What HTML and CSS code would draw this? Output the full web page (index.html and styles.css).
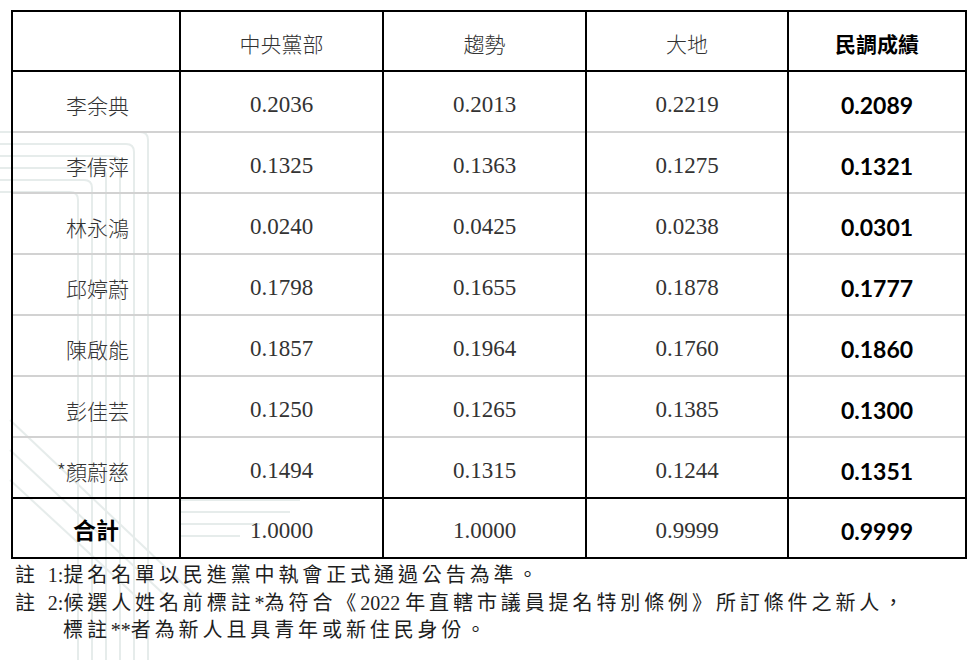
FILE: index.html
```html
<!DOCTYPE html>
<html lang="zh-Hant">
<head>
<meta charset="utf-8">
<title>民調成績</title>
<link rel="stylesheet" href="styles.css">
</head>
<body>
<div class="page">
  <svg class="watermark" width="330" height="540" viewBox="0 0 330 540" aria-hidden="true">
    <g fill="none" stroke="#e6eceb" stroke-width="2">
      <path d="M0 12 H140 Q148 12 148 20 V540"/>
      <path d="M0 24 H126 Q134 24 134 32 V540"/>
      <path d="M0 36 H112 Q120 36 120 44 V540"/>
      <path d="M0 48 H98 Q106 48 106 56 V540"/>
      <path d="M0 60 H84 Q92 60 92 68 V540"/>
      <path d="M0 72 H70 Q78 72 78 80 V540"/>
      <path d="M10 300 L200 480"/>
      <path d="M10 330 L170 480"/>
      <path d="M10 360 L140 480"/>
      <path d="M180 380 H300"/>
      <path d="M180 392 H290"/>
      <path d="M180 404 H260"/>
      <path d="M180 416 H240"/>
    </g>
  </svg>
  <table class="scores">
    <colgroup>
      <col class="c-name">
      <col class="c-a">
      <col class="c-b">
      <col class="c-c">
      <col class="c-total">
    </colgroup>
    <thead>
      <tr class="head">
        <th></th>
        <th>中央黨部</th>
        <th>趨勢</th>
        <th>大地</th>
        <th class="strong">民調成績</th>
      </tr>
    </thead>
    <tbody>
      <tr><td class="name">李余典</td><td>0.2036</td><td>0.2013</td><td>0.2219</td><td class="score">0.2089</td></tr>
      <tr><td class="name">李倩萍</td><td>0.1325</td><td>0.1363</td><td>0.1275</td><td class="score">0.1321</td></tr>
      <tr><td class="name">林永鴻</td><td>0.0240</td><td>0.0425</td><td>0.0238</td><td class="score">0.0301</td></tr>
      <tr><td class="name">邱婷蔚</td><td>0.1798</td><td>0.1655</td><td>0.1878</td><td class="score">0.1777</td></tr>
      <tr><td class="name">陳啟能</td><td>0.1857</td><td>0.1964</td><td>0.1760</td><td class="score">0.1860</td></tr>
      <tr><td class="name">彭佳芸</td><td>0.1250</td><td>0.1265</td><td>0.1385</td><td class="score">0.1300</td></tr>
      <tr><td class="name">*顏蔚慈</td><td>0.1494</td><td>0.1315</td><td>0.1244</td><td class="score">0.1351</td></tr>
    </tbody>
    <tfoot>
      <tr class="sum"><td class="sum-label">合計</td><td>1.0000</td><td>1.0000</td><td>0.9999</td><td class="score">0.9999</td></tr>
    </tfoot>
  </table>
  <div class="notes">
    <p class="note">註 <span class="lat">1:</span>提名名單以民進黨中執會正式通過公告為準。</p>
    <p class="note">註 <span class="lat">2:</span>候選人姓名前標註<span class="lat">*</span>為符合《<span class="lat">2022 </span>年直轄市議員提名特別條例》所訂條件之新人，</p>
    <p class="note indent">標註<span class="lat">**</span>者為新人且具青年或新住民身份。</p>
  </div>
</div>
</body>
</html>
```
FILE: styles.css
```css
html, body {
  margin: 0;
  padding: 0;
  background: #ffffff;
}

.page {
  position: relative;
  width: 979px;
  height: 661px;
  padding: 10px 0 0 11px;
  box-sizing: border-box;
  overflow: hidden;
}

.watermark {
  position: absolute;
  left: 0;
  top: 120px;
  z-index: 0;
}

.scores {
  position: relative;
  z-index: 1;
  border-collapse: collapse;
  table-layout: fixed;
  width: 956px;
  border: 2px solid #000;
}

.c-name { width: 168px; }
.c-a { width: 203px; }
.c-b { width: 203px; }
.c-c { width: 202px; }
.c-total { width: 178px; }

.scores th,
.scores td {
  padding: 4px 0 0;
  text-align: center;
  vertical-align: middle;
  border-left: 2px solid #000;
  border-right: 2px solid #000;
}

.scores td {
  padding-top: 6px;
}

.scores th {
  font-family: "Noto Sans CJK TC", "Noto Sans", sans-serif;
  font-weight: 300;
  font-size: 21px;
  color: #333;
}

.scores th.strong {
  font-weight: 700;
  color: #000;
}

.head {
  height: 60px;
  border-bottom: 2px solid #000;
}

.scores tbody tr {
  height: 61px;
  border-top: 2px solid #d2d2d2;
}

.scores tbody tr:first-child {
  border-top: 2px solid #000;
}

.scores td {
  font-family: "Liberation Serif", "Times New Roman", serif;
  font-size: 23px;
  color: #333;
}

.scores td.name {
  font-family: "Noto Sans CJK TC", sans-serif;
  font-weight: 300;
  font-size: 21px;
  color: #333;
  text-align: right;
  padding-right: 50px;
}

.scores td.score {
  font-family: "Lato", "Liberation Sans", sans-serif;
  font-weight: 700;
  font-size: 23px;
  color: #000;
}

.sum {
  height: 60px;
  border-top: 2px solid #000;
}

.scores td.sum-label {
  font-family: "Noto Sans CJK TC", sans-serif;
  font-weight: 700;
  font-size: 23px;
  color: #000;
  padding-top: 2px;
}

.notes {
  margin-top: 3px;
  padding-left: 4px;
  position: relative;
  z-index: 1;
}

.note {
  margin: 0;
  font-family: "Liberation Serif", "Noto Sans CJK TC", serif;
  font-size: 20px;
  line-height: 27.5px;
  letter-spacing: 3.9px;
  color: #1e1e1e;
  white-space: nowrap;
}

.note .lat {
  letter-spacing: 0;
}

.note.indent {
  padding-left: 48px;
}
```
